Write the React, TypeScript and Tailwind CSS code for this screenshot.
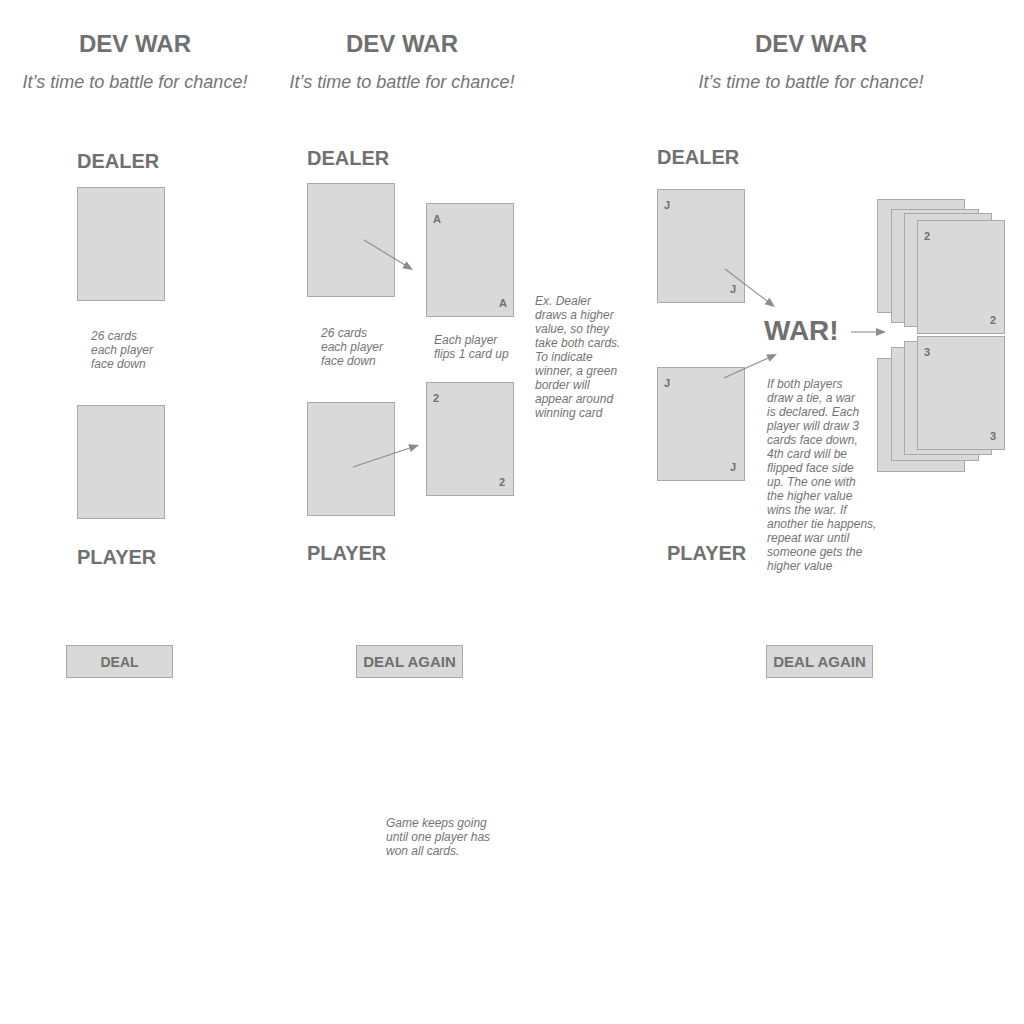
import React from "react";

type CardProps = { className?: string; tl?: string; br?: string };

function Card({ className = "", tl, br }: CardProps) {
  return (
    <div
      className={`w-[88px] h-[114px] shrink-0 bg-[#d9d9d9] border border-[#a9a9a9] flex flex-col justify-between pl-[6px] pt-[10px] pb-[7px] text-[11px] leading-none font-bold text-[#6f6f6f] ${className}`}
    >
      <span className="h-[11px]">{tl}</span>
      <span className="h-[11px] pl-[66px]">{br}</span>
    </div>
  );
}

function Note({ className = "", text }: { className?: string; text: string }) {
  return (
    <div
      className={`text-[12px] leading-[14px] italic text-[#747474] whitespace-pre ${className}`}
    >
      {text}
    </div>
  );
}

function Header({ className }: { className: string }) {
  return (
    <div className={`flex flex-col items-center gap-[17px] ${className}`}>
      <div className="text-[24px] leading-none font-bold text-[#707070]">DEV WAR</div>
      <div className="text-[18px] leading-none italic text-[#747474] whitespace-nowrap">
        It’s time to battle for chance!
      </div>
    </div>
  );
}

function Label({ className = "", text }: { className?: string; text: string }) {
  return (
    <div className={`text-[20px] leading-none font-bold text-[#707070] ${className}`}>
      {text}
    </div>
  );
}

function Button({ className = "", text, size }: { className?: string; text: string; size: string }) {
  return (
    <div
      className={`w-[107px] h-[33px] shrink-0 bg-[#d9d9d9] border border-[#a9a9a9] flex items-center justify-center font-bold leading-none text-[#707070] ${size} ${className}`}
    >
      {text}
    </div>
  );
}

const arrows: [number, number, number, number][] = [
  [364, 240, 413, 270],
  [353, 467, 419, 445],
  [725, 269, 775, 307],
  [724, 378, 777, 354],
  [851, 332, 886, 332],
];

function Arrows() {
  return (
    <svg
      className="absolute left-0 top-0 pointer-events-none"
      width={1024}
      height={1024}
      viewBox="0 0 1024 1024"
    >
      {arrows.map(([x1, y1, x2, y2], i) => {
        const dx = x2 - x1;
        const dy = y2 - y1;
        const len = Math.hypot(dx, dy);
        const ux = dx / len;
        const uy = dy / len;
        const L = 10;
        const W = 4;
        const bx = x2 - ux * L;
        const by = y2 - uy * L;
        const nx = -uy;
        const ny = ux;
        const pts = `${x2},${y2} ${bx + nx * W},${by + ny * W} ${bx - nx * W},${by - ny * W}`;
        return (
          <g key={i}>
            <line x1={x1} y1={y1} x2={bx + ux} y2={by + uy} stroke="#8c8c8c" strokeWidth={1.1} />
            <polygon points={pts} fill="#8c8c8c" />
          </g>
        );
      })}
    </svg>
  );
}

export default function App() {
  return (
    <div className="relative w-[1024px] h-[1024px] bg-white overflow-hidden font-['Liberation_Sans',Arial,sans-serif]">
      <div className="flex items-start">
        {/* Frame 1 */}
        <div className="w-[280px] shrink-0 pt-[32px]">
          <Header className="w-[270px]" />
          <div className="flex flex-col items-start pl-[77px] mt-[60px]">
            <Label text="DEALER" />
            <Card className="mt-[16px]" />
            <Note className="mt-[28px] ml-[14px]" text={"26 cards\neach player\nface down"} />
            <Card className="mt-[34px]" />
            <Label className="mt-[28px]" text="PLAYER" />
            <Button className="mt-[78px] -ml-[11px]" text="DEAL" size="text-[14px]" />
          </div>
        </div>

        {/* Frame 2 */}
        <div className="w-[360px] shrink-0 pt-[32px]">
          <Header className="w-[244px]" />
          <div className="flex items-start pl-[27px] mt-[57px]">
            <div className="flex flex-col items-start w-[119px] shrink-0">
              <Label text="DEALER" />
              <Card className="mt-[15px]" />
              <Note className="mt-[29px] ml-[14px]" text={"26 cards\neach player\nface down"} />
              <Card className="mt-[34px]" />
              <Label className="mt-[27px]" text="PLAYER" />
              <Button className="mt-[82px] ml-[49px]" text="DEAL AGAIN" size="text-[15px]" />
              <Note
                className="mt-[138px] ml-[79px]"
                text={"Game keeps going\nuntil one player has\nwon all cards."}
              />
            </div>
            <div className="flex flex-col items-start w-[109px] shrink-0 pt-[55px]">
              <Card tl="A" br="A" />
              <Note className="mt-[16px] ml-[8px]" text={"Each player\nflips 1 card up"} />
              <Card className="mt-[21px]" tl="2" br="2" />
            </div>
            <div className="pt-[146px]">
              <Note
                text={
                  "Ex. Dealer\ndraws a higher\nvalue, so they\ntake both cards.\nTo indicate\nwinner, a green\nborder will\nappear around\nwinning card"
                }
              />
            </div>
          </div>
        </div>

        {/* Frame 3 */}
        <div className="w-[384px] shrink-0 pt-[32px]">
          <Header className="w-[342px]" />
          <div className="flex items-start pl-[17px] mt-[56px]">
            <div className="flex flex-col items-start w-[107px] shrink-0">
              <Label text="DEALER" />
              <Card className="mt-[22px]" tl="J" br="J" />
              <Card className="mt-[64px]" tl="J" br="J" />
              <Label className="mt-[62px] ml-[10px]" text="PLAYER" />
            </div>
            <div className="flex flex-col items-start w-[113px] shrink-0 pt-[170px]">
              <div className="text-[28px] leading-none font-bold text-[#707070]">WAR!</div>
              <Note
                className="mt-[32px] ml-[3px]"
                text={
                  "If both players\ndraw a tie, a war\nis declared. Each\nplayer will draw 3\ncards face down,\n4th card will be\nflipped face side\nup. The one with\nthe higher value\nwins the war. If\nanother tie happens,\nrepeat war until\nsomeone gets the\nhigher value"
                }
              />
              <Button className="mt-[72px] ml-[2px]" text="DEAL AGAIN" size="text-[15px]" />
            </div>
            {/* stacked war piles: overlapping cards */}
            <div className="relative w-[128px] h-[272px] shrink-0 mt-[52px]">
              <Card className="absolute left-0 top-0" />
              <Card className="absolute left-[14px] top-[10px]" />
              <Card className="absolute left-[27px] top-[14px]" />
              <Card className="absolute left-[40px] top-[21px]" tl="2" br="2" />
              <Card className="absolute left-0 top-[159px]" />
              <Card className="absolute left-[14px] top-[148px]" />
              <Card className="absolute left-[27px] top-[142px]" />
              <Card className="absolute left-[40px] top-[137px]" tl="3" br="3" />
            </div>
          </div>
        </div>
      </div>
      <Arrows />
    </div>
  );
}
